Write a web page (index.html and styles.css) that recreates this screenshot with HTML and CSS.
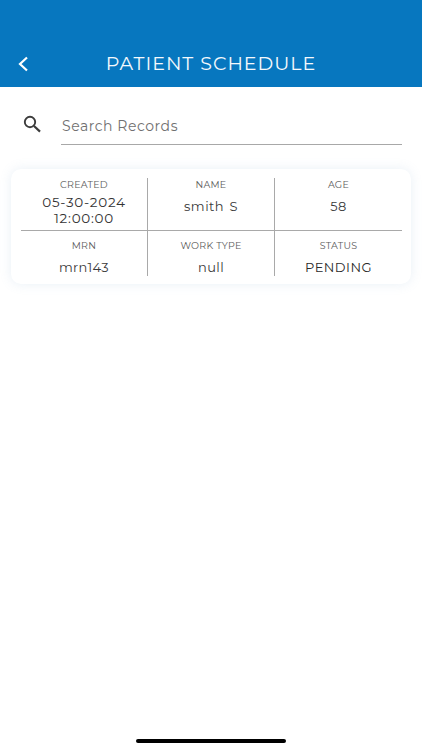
FILE: index.html
```html
<!DOCTYPE html>
<html lang="en">
<head>
<meta charset="utf-8">
<title>Patient Schedule</title>
<link rel="stylesheet" href="styles.css">
</head>
<body>
<div class="screen">
  <header class="appbar">
    <svg class="back" viewBox="0 0 12 16" width="12" height="16"><path d="M10 1.5 3 8l7 6.5" fill="none" stroke="#fff" stroke-width="2.2"/></svg>
    <h1 class="title">PATIENT SCHEDULE</h1>
  </header>
  <div class="search">
    <svg class="search-icon" viewBox="0 0 20 20" width="20" height="20"><circle cx="8" cy="8" r="5.2" fill="none" stroke="#3c3c3c" stroke-width="1.9"/><path d="m12 12 6 5.6" fill="none" stroke="#3c3c3c" stroke-width="2.2"/></svg>
    <div class="search-field">Search Records</div>
  </div>
  <section class="card">
    <div class="grid">
      <div class="cell right bottom"><div class="label">CREATED</div><div class="value date">05-30-2024<br>12:00:00</div></div>
      <div class="cell right bottom"><div class="label">NAME</div><div class="value middle name">smith S</div></div>
      <div class="cell bottom"><div class="label">AGE</div><div class="value middle">58</div></div>
      <div class="cell right"><div class="label">MRN</div><div class="value">mrn143</div></div>
      <div class="cell right"><div class="label">WORK TYPE</div><div class="value">null</div></div>
      <div class="cell"><div class="label">STATUS</div><div class="value status">PENDING</div></div>
    </div>
  </section>
  <div class="spacer"></div>
  <div class="home-wrap"><div class="home"></div></div>
</div>
</body>
</html>
```
FILE: styles.css
```css
* { box-sizing: border-box; }
html, body { margin: 0; padding: 0; background: #fff; }
body { font-family: "Montserrat", "Inter", "Open Sans", "Liberation Sans", sans-serif; }
.screen { width: 422px; height: 750px; display: flex; flex-direction: column; overflow: hidden; }
.appbar { height: 87px; background: #0777bf; display: flex; align-items: flex-end; padding: 0 0 15px 17px; position: relative; }
.back { display: block; }
.title { position: absolute; left: 0; right: 0; bottom: 11px; margin: 0; text-align: center; color: #f4f9fc; font-size: 19px; line-height: 24px; font-weight: 400; letter-spacing: 1px; }
.search { display: flex; padding: 18px 20px 0 22px; gap: 19px; height: 82px; background: #fff; }
.search-icon { margin-top: 9px; flex: none; }
.search-field { flex: 1; height: 40px; border-bottom: 1.5px solid #a8a8a8; color: #707070; font-size: 14px; letter-spacing: 0.55px; line-height: 42px; padding-left: 1px; }
.card { margin: 0 11px; height: 115px; background: #fff; border-radius: 10px; box-shadow: 0 0 12px rgba(120, 160, 200, 0.16); padding: 9px 10px; }
.grid { display: grid; grid-template-columns: 127px 127px 127px; grid-template-rows: 53px 45px; }
.cell { display: flex; flex-direction: column; align-items: center; text-align: center; }
.right { border-right: 1px solid #a9a9a9; }
.bottom { border-bottom: 1px solid #a9a9a9; }
.label { font-size: 9.5px; line-height: 13px; color: #5c5c5c; letter-spacing: 0.25px; }
.value { font-size: 13px; line-height: 16px; color: #3a3a3a; letter-spacing: 0.4px; margin-top: 3px; }
.date { font-size: 13.5px; letter-spacing: 0.75px; color: #333; }
.name { letter-spacing: 0.5px; word-spacing: 1.5px; }
.cell:nth-child(n+4) { padding-top: 8px; }
.cell:nth-child(n+4) .value { margin-top: 7px; }
.middle { margin-top: 7px; }
.status { letter-spacing: 0.45px; color: #2a2a2a; }
.spacer { flex: 1; }
.home-wrap { display: flex; justify-content: center; padding-bottom: 7px; }
.home { width: 150px; height: 4px; border-radius: 2px; background: #000; }
```
